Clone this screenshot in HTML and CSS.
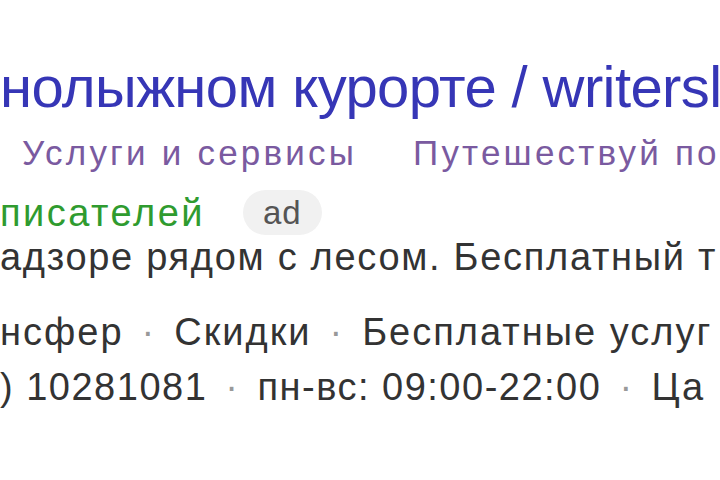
FILE: index.html
```html
<!DOCTYPE html>
<html lang="ru">
<head>
    <meta charset="UTF-8">
    <title>Реклама</title>
    <link rel="stylesheet" href="styles.css">
</head>
<body>
    <div class="snippet">
        <div class="title">нолыжном курорте / writersl</div>
        <div class="links">
            <span>Услуги и сервисы</span>
            <span>Путешествуй по</span>
        </div>
        <div class="path">
            <span class="domain">писателей</span>
            <span class="badge">ad</span>
        </div>
        <div class="text">адзоре рядом с лесом. Бесплатный т</div>
        <div class="meta">нсфер<span class="dot">·</span>Скидки<span class="dot">·</span>Бесплатные услуг</div>
        <div class="meta contacts">) 10281081<span class="dot">·</span>пн-вс: 09:00-22:00<span class="dot">·</span>Ца</div>
    </div>
</body>
</html>
```

FILE: styles.css
```css
body {
    margin: 0;
    background: #fff;
    font-family: "Liberation Sans", Arial, sans-serif;
    overflow: hidden;
}
.snippet {
    padding-top: 52px;
    white-space: nowrap;
}
.title {
    font-size: 58px;
    line-height: 70px;
    letter-spacing: -0.6px;
    color: #3636b6;
}
.links {
    display: flex;
    gap: 56px;
    margin-top: 9px;
    padding-left: 22px;
    font-size: 35px;
    line-height: 44px;
    letter-spacing: 3.2px;
    color: #7a5aa0;
}
.path {
    display: flex;
    align-items: center;
    gap: 38px;
    margin-top: 15px;
    font-size: 38px;
    line-height: 44px;
}
.domain {
    color: #2f9b2f;
    letter-spacing: 2.5px;
}
.badge {
    padding: 0 20px;
    border-radius: 23px;
    background: #f1f1f1;
    color: #555;
    font-size: 33px;
    line-height: 45px;
    letter-spacing: 1px;
}
.text {
    font-size: 38px;
    line-height: 44px;
    letter-spacing: 1.7px;
    color: #333;
}
.meta {
    font-size: 38px;
    line-height: 55px;
    letter-spacing: 2px;
    color: #333;
}
.meta.contacts {
    letter-spacing: 1.5px;
}
.text + .meta {
    margin-top: 26px;
}
.dot {
    padding: 0 18px;
    color: #999;
}
```
